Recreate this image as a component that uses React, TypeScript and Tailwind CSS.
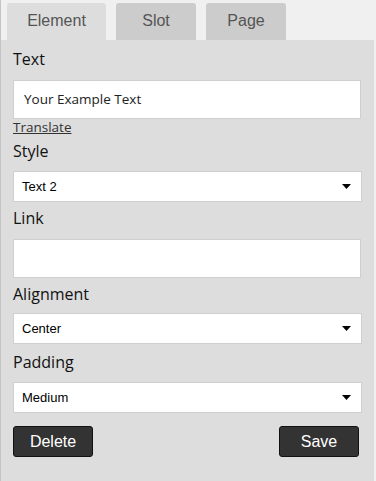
const labelCls = "text-[16px] leading-[22px] text-[#111] font-['Open_Sans',sans-serif]"

function Label({ children, className = '' }: { children: string; className?: string }) {
  return <div className={`${labelCls} ${className}`}>{children}</div>
}

function Select({ value }: { value: string }) {
  return (
    <div className="flex h-[31px] w-[349px] items-center justify-between border border-[#cfcfcf] bg-white pl-[8px] pr-[10px] font-['Liberation_Sans',Arial,sans-serif] text-[13px] text-black">
      <span>{value}</span>
      <svg width="9" height="5" viewBox="0 0 9 5">
        <path d="M0 0h9L4.5 5z" fill="#000" />
      </svg>
    </div>
  )
}

function TextInput({ value }: { value?: string }) {
  return (
    <div className="flex h-[39px] w-[348px] items-center border border-[#cfcfcf] bg-white pl-[10px] font-['Open_Sans',sans-serif] text-[13.5px] text-[#222]">
      {value}
    </div>
  )
}

export default function App() {
  const tabs = [
    { name: 'Element', w: 'w-[99px]', active: true },
    { name: 'Slot', w: 'w-[80px]', active: false },
    { name: 'Page', w: 'w-[80px]', active: false },
  ]

  return (
    <div className="min-h-[481px] w-[376px] border-l border-[#c4c4c4] bg-[#f0f0f0]">
      <div className="flex gap-[10px] pl-[6px] pt-[3px]">
        {tabs.map((t) => (
          <div
            key={t.name}
            className={`flex h-[37px] ${t.w} items-center justify-center rounded-t-[3px] pb-[1px] font-['Liberation_Sans',Arial,sans-serif] text-[16px] text-[#555] ${
              t.active ? 'bg-[#dddddd]' : 'bg-[#cccccc]'
            }`}
          >
            {t.name}
          </div>
        ))}
      </div>

      <div className="min-h-[441px] w-[373px] bg-[#dddddd] pl-[12px] pt-[8px]">
        <Label className="mb-[10px]">Text</Label>
        <TextInput value="Your Example Text" />
        <div className="font-['Open_Sans',sans-serif] text-[13.5px] leading-[17px] text-[#333] underline">
          Translate
        </div>

        <Label className="mt-[4px] mb-[9px]">Style</Label>
        <Select value="Text 2" />

        <Label className="mt-[5px] mb-[10px]">Link</Label>
        <TextInput />

        <Label className="mt-[5px] mb-[8px]">Alignment</Label>
        <Select value="Center" />

        <Label className="mt-[7px] mb-[9px]">Padding</Label>
        <Select value="Medium" />

        <div className="mt-[13px] flex w-[346px] justify-between">
          <button className="h-[31px] w-[80px] rounded-[3px] border border-[#111] bg-[#333] font-['Liberation_Sans',Arial,sans-serif] text-[16px] text-white">
            Delete
          </button>
          <button className="h-[31px] w-[80px] rounded-[3px] border border-[#111] bg-[#333] font-['Liberation_Sans',Arial,sans-serif] text-[16px] text-white">
            Save
          </button>
        </div>
      </div>
    </div>
  )
}
